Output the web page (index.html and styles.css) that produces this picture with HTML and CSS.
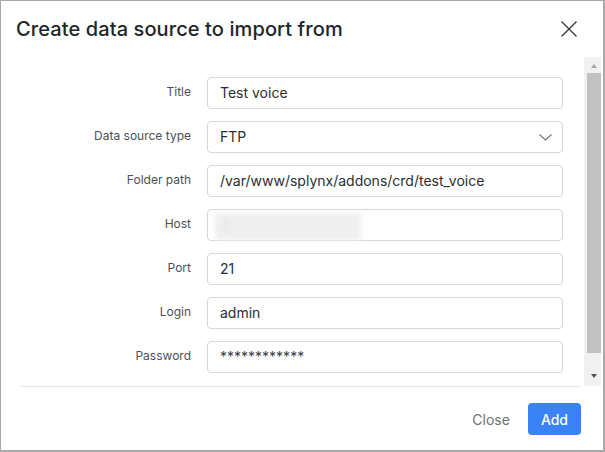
FILE: index.html
```html
<!DOCTYPE html>
<html lang="en">
<head>
<meta charset="utf-8">
<title>Create data source to import from</title>
<link rel="stylesheet" href="styles.css">
</head>
<body>
<div class="dialog">
  <div class="header">
    <h1 class="title">Create data source to import from</h1>
    <button class="close-x" aria-label="Close">
      <svg width="16" height="16" viewBox="0 0 16 16"><path d="M0.5 0.5 L15.5 15.5 M15.5 0.5 L0.5 15.5" stroke="#3a3a3a" stroke-width="1.4" fill="none"/></svg>
    </button>
  </div>
  <div class="body">
    <div class="form">
      <label class="label">Title</label>
      <div class="input">Test voice</div>
      <label class="label">Data source type</label>
      <div class="input select">FTP
        <svg class="chev" width="13" height="7" viewBox="0 0 13 7"><path d="M0.5 0.5 L6.5 6 L12.5 0.5" stroke="#6b7280" stroke-width="1.1" fill="none"/></svg>
      </div>
      <label class="label">Folder path</label>
      <div class="input">/var/www/splynx/addons/crd/test_voice</div>
      <label class="label">Host</label>
      <div class="input"><span class="blur">1</span></div>
      <label class="label">Port</label>
      <div class="input">21</div>
      <label class="label">Login</label>
      <div class="input">admin</div>
      <label class="label">Password</label>
      <div class="input pass">************</div>
    </div>
    <div class="scrollbar">
      <div class="arrow up"></div>
      <div class="thumb"></div>
      <div class="arrow down"></div>
    </div>
  </div>
  <div class="footer">
    <button class="btn btn-close">Close</button>
    <button class="btn btn-add">Add</button>
  </div>
</div>
</body>
</html>
```

FILE: styles.css
```css
* { box-sizing: border-box; }
html, body { margin: 0; padding: 0; background: #fff; }
body { font-family: Inter, "Noto Sans", sans-serif; color: #212529; }

.dialog {
  width: 605px;
  height: 452px;
  border: 1px solid #a9a9a9;
  border-right-width: 2px;
  border-bottom-width: 2px;
  display: flex;
  flex-direction: column;
}

.header {
  height: 56px;
  display: flex;
  align-items: center;
  justify-content: space-between;
  padding: 0 26px 0 15px;
}
.title {
  margin: 0;
  font-size: 20px;
  line-height: 24px;
  font-weight: 500;
  color: #212529;
  letter-spacing: 0.1px;
}
.close-x {
  border: 0;
  background: none;
  padding: 0;
  width: 16px;
  height: 16px;
  display: block;
}
.close-x svg { display: block; }

.body {
  height: 329px;
  display: flex;
}
.form {
  flex: 1;
  padding-top: 20px;
  display: grid;
  grid-template-columns: 190px 356px;
  column-gap: 16px;
  row-gap: 12px;
  align-content: start;
  align-items: center;
}
.label {
  text-align: right;
  font-size: 12px;
  color: #4b5058;
  line-height: 16px;
  margin-top: -3px;
}
.input {
  height: 32px;
  border: 1px solid #d3d6db;
  border-radius: 4px;
  padding: 0 12px;
  font-size: 14px;
  line-height: 30px;
  color: #2a2e33;
  white-space: nowrap;
  display: flex;
  align-items: center;
}
.select { justify-content: space-between; padding-right: 10px; }
.chev { display: block; }
.pass { color: #3a3d42; }
.blur {
  display: block;
  width: 146px;
  height: 27px;
  margin: 2px 0 0 -5px;
  background: #efefef;
  color: #dcdcdc;
  padding-left: 8px;
  line-height: 27px;
  filter: blur(2px);
}

.scrollbar {
  width: 17px;
  margin-right: 2px;
  background: #f1f1f1;
  display: flex;
  flex-direction: column;
  align-items: center;
}
.thumb {
  width: 14px;
  margin-left: 2px;
  height: 280px;
  background: #c1c1c1;
}
.arrow {
  width: 0;
  height: 0;
  border-left: 3.5px solid transparent;
  border-right: 3.5px solid transparent;
  margin-left: 2px;
}
.arrow.up {
  border-bottom: 4px solid #a3a3a3;
  margin-top: 7px;
  margin-bottom: 5px;
}
.arrow.down {
  border-top: 4px solid #505050;
  margin-top: 21px;
}

.footer {
  margin: 0 22px 0 20px;
  border-top: 1px solid #e5e7eb;
  padding: 16px 0 15px;
  display: flex;
  justify-content: flex-end;
  gap: 6px;
}
.btn {
  height: 32px;
  border: 0;
  border-radius: 4px;
  padding: 0 12px;
  font-family: Inter, "Noto Sans", sans-serif;
  font-size: 14px;
  background: none;
}
.btn-close { color: #6b7078; }
.btn-add {
  background: #3b82f6;
  color: #fff;
  font-weight: 500;
  padding: 0 13px;
}
```
